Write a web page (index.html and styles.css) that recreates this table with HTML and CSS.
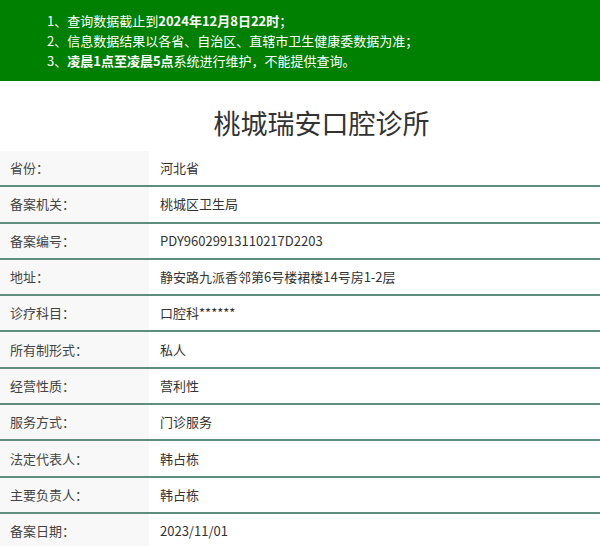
FILE: index.html
```html
<!DOCTYPE html>
<html lang="zh-CN">
<head>
<meta charset="utf-8">
<title>桃城瑞安口腔诊所</title>
<link rel="stylesheet" href="styles.css">
</head>
<body>
<div class="notice">
  <p>1、查询数据截止到<b>2024年12月8日22时</b>；</p>
  <p>2、信息数据结果以各省、自治区、直辖市卫生健康委数据为准；</p>
  <p>3、<b>凌晨1点至凌晨5点</b>系统进行维护，不能提供查询。</p>
</div>
<h1 class="title">桃城瑞安口腔诊所</h1>
<table class="info">
  <tr><th>省份：</th><td>河北省</td></tr>
  <tr><th>备案机关：</th><td>桃城区卫生局</td></tr>
  <tr><th>备案编号：</th><td>PDY96029913110217D2203</td></tr>
  <tr><th>地址：</th><td>静安路九派香邻第6号楼裙楼14号房1-2层</td></tr>
  <tr><th>诊疗科目：</th><td>口腔科******</td></tr>
  <tr><th>所有制形式：</th><td>私人</td></tr>
  <tr><th>经营性质：</th><td>营利性</td></tr>
  <tr><th>服务方式：</th><td>门诊服务</td></tr>
  <tr><th>法定代表人：</th><td>韩占栋</td></tr>
  <tr><th>主要负责人：</th><td>韩占栋</td></tr>
  <tr><th>备案日期：</th><td>2023/11/01</td></tr>
</table>
</body>
</html>
```
FILE: styles.css
```css
html, body {
  margin: 0;
  padding: 0;
  background: #fff;
}
body {
  font-family: "Noto Sans CJK SC", "Noto Sans", sans-serif;
  color: #333;
  font-size: 13px;
}
.notice {
  background: #008000;
  color: #fff;
  padding: 11px 0 10px 47px;
  line-height: 20px;
  font-size: 13px;
}
.notice p {
  margin: 0;
}
.notice b {
  font-weight: 700;
}
.title {
  margin: 24px 0 10px;
  padding-left: 43px;
  text-align: center;
  font-size: 27px;
  line-height: 36px;
  font-weight: 400;
  color: #333;
}
.info {
  width: 100%;
  border-collapse: collapse;
}
.info tr {
  border-bottom: 2px solid #5f8e7e;
}
.info th,
.info td {
  height: 34.3px;
  padding: 0 11px;
  text-align: left;
  font-weight: 400;
  vertical-align: middle;
  line-height: 20px;
}
.info th {
  width: 128px;
  background: #f8f8f8;
  padding-left: 10px;
  color: #444;
}
.info td {
  color: #333;
}
```
